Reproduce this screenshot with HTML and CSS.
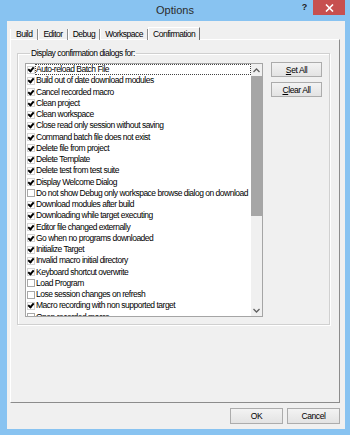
FILE: index.html
```html
<!DOCTYPE html>
<html>
<head>
	<title>Options</title>
	<link rel="stylesheet" href="styles.css">
</head>
<body>
	<div class="window">
		<div class="titlebar">
			<span class="title">Options</span>
			<span class="help">?</span>
			<span class="close">
				<svg width="9" height="8" viewBox="0 0 9 8"><path d="M1 0.5 L8 7.5 M8 0.5 L1 7.5" stroke="#fff" stroke-width="1.6" fill="none"/></svg>
			</span>
		</div>
		<div class="client">
			<div class="tabs">
				<div class="tab">Build</div>
				<div class="tab">Editor</div>
				<div class="tab">Debug</div>
				<div class="tab">Workspace</div>
				<div class="tab active">Confirmation</div>
			</div>
			<div class="panel">
				<fieldset class="group">
					<legend>Display confirmation dialogs for:</legend>
					<div class="group-body">
						<div class="listbox">
							<ul class="items">
								<li><span class="box on"></span><span class="label focus">Auto-reload Batch File</span></li>
								<li><span class="box on"></span><span class="label">Build out of date download modules</span></li>
								<li><span class="box on"></span><span class="label">Cancel recorded macro</span></li>
								<li><span class="box on"></span><span class="label">Clean project</span></li>
								<li><span class="box on"></span><span class="label">Clean workspace</span></li>
								<li><span class="box on"></span><span class="label">Close read only session without saving</span></li>
								<li><span class="box on"></span><span class="label">Command batch file does not exist</span></li>
								<li><span class="box on"></span><span class="label">Delete file from project</span></li>
								<li><span class="box on"></span><span class="label">Delete Template</span></li>
								<li><span class="box on"></span><span class="label">Delete test from test suite</span></li>
								<li><span class="box on"></span><span class="label">Display Welcome Dialog</span></li>
								<li><span class="box"></span><span class="label">Do not show Debug only workspace browse dialog on download</span></li>
								<li><span class="box on"></span><span class="label">Download modules after build</span></li>
								<li><span class="box on"></span><span class="label">Downloading while target executing</span></li>
								<li><span class="box on"></span><span class="label">Editor file changed externally</span></li>
								<li><span class="box on"></span><span class="label">Go when no programs downloaded</span></li>
								<li><span class="box on"></span><span class="label">Initialize Target</span></li>
								<li><span class="box on"></span><span class="label">Invalid macro initial directory</span></li>
								<li><span class="box on"></span><span class="label">Keyboard shortcut overwrite</span></li>
								<li><span class="box"></span><span class="label">Load Program</span></li>
								<li><span class="box"></span><span class="label">Lose session changes on refresh</span></li>
								<li><span class="box on"></span><span class="label">Macro recording with non supported target</span></li>
								<li><span class="box"></span><span class="label">Open recorded macro</span></li>
							</ul>
							<div class="scrollbar">
								<div class="arrow">
									<svg width="7" height="5" viewBox="0 0 7 5"><path d="M0.5 4 L3.5 1 L6.5 4" stroke="#606060" stroke-width="1.3" fill="none"/></svg>
								</div>
								<div class="thumb"></div>
								<div class="track"></div>
								<div class="arrow">
									<svg width="7" height="5" viewBox="0 0 7 5"><path d="M0.5 1 L3.5 4 L6.5 1" stroke="#606060" stroke-width="1.3" fill="none"/></svg>
								</div>
							</div>
						</div>
						<div class="side-buttons">
							<button><u>S</u>et All</button>
							<button><u>C</u>lear All</button>
						</div>
					</div>
				</fieldset>
			</div>
			<div class="dialog-buttons">
				<button>OK</button>
				<button>Cancel</button>
			</div>
		</div>
	</div>
</body>
</html>
```

FILE: styles.css
```css
body {
	margin: 0;
	font-family: "Liberation Sans", Arial, sans-serif;
	font-size: 8.5px;
	letter-spacing: -0.5px;
	color: #000;
}

.window {
	width: 350px;
	height: 435px;
	background-color: #88c3f1;
	display: flex;
	flex-direction: column;
}

.titlebar {
	height: 21px;
	display: flex;
	align-items: flex-start;
	padding: 0 5px 0 54px;
	letter-spacing: 0;
}

.title {
	flex: 1;
	text-align: center;
	font-size: 11px;
	line-height: 21px;
	color: #2b2b2b;
}

.help {
	width: 17px;
	text-align: center;
	font-weight: bold;
	font-size: 9px;
	line-height: 14px;
	color: #222;
}

.close {
	width: 32px;
	height: 15px;
	background-color: #c7504f;
	display: flex;
	align-items: center;
	justify-content: center;
}

.client {
	flex: 1;
	margin: 0 5px 6px 7px;
	padding: 6px 5px 5px 3px;
	background-color: #f0f0f0;
	display: flex;
	flex-direction: column;
}

.tabs {
	height: 13px;
	display: flex;
	align-items: flex-end;
	margin-bottom: -1px;
	position: relative;
	z-index: 1;
}

.tab {
	height: 11px;
	line-height: 11px;
	padding: 0 4px;
	border-left: 1px solid #fff;
	border-right: 1px solid #8c8c8c;
	box-sizing: border-box;
}

.tab:first-child {
	padding: 0 5px;
}

.tab.active {
	height: 13px;
	line-height: 12px;
	border-top: 1px solid #fff;
	border-right: 1px solid #6e6e6e;
	background-color: #f0f0f0;
}

.panel {
	height: 364px;
	box-sizing: border-box;
	border-top: 1px solid #fff;
	border-left: 1px solid #fff;
	border-right: 1px solid #8c8c8c;
	border-bottom: 1px solid #8c8c8c;
	padding-top: 7px;
}

.group {
	margin: 0 9px 0 6px;
	padding: 4px 7px 7px 7px;
	border: 1px solid #d0d0d0;
	box-shadow: 1px 1px 0 #fff, inset 1px 1px 0 #fff;
}

.group legend {
	margin-left: 5px;
	padding: 0 1px;
	line-height: 12px;
}

.group-body {
	display: flex;
	gap: 8px;
}

.listbox {
	width: 238px;
	height: 254px;
	box-sizing: border-box;
	border: 1px solid #a5a5a5;
	background-color: #fff;
	display: flex;
}

.items {
	flex: 1;
	list-style: none;
	margin: 0;
	padding: 0 0 0 1px;
	overflow: hidden;
}

.items li {
	height: 11.25px;
	display: flex;
	align-items: center;
	white-space: nowrap;
}

.box {
	width: 8px;
	height: 8px;
	box-sizing: border-box;
	border: 1px solid #a8a8a8;
	background-color: #fff;
	display: flex;
	align-items: center;
	justify-content: center;
	flex-shrink: 0;
}

.box.on {
	border-color: #d4d4d4;
}

.box.on::after {
	content: "";
	width: 2px;
	height: 4px;
	margin-top: -1px;
	border: solid #000;
	border-width: 0 2px 2px 0;
	transform: rotate(40deg);
}

.label {
	flex: 1;
	height: 11px;
	line-height: 9px;
	border: 1px dotted transparent;
	box-sizing: border-box;
}

.label.focus {
	border-color: #444;
}

.scrollbar {
	width: 11px;
	background-color: #f0f0f0;
	display: flex;
	flex-direction: column;
}

.arrow {
	height: 12px;
	display: flex;
	align-items: center;
	justify-content: center;
}

.thumb {
	height: 140px;
	background-color: #a6a6a6;
}

.track {
	flex: 1;
}

.side-buttons {
	display: flex;
	flex-direction: column;
	gap: 5px;
	margin-top: -1px;
}

button {
	font-family: "Liberation Sans", Arial, sans-serif;
	font-size: 8.5px;
	letter-spacing: -0.4px;
	color: #000;
	padding: 0;
	border: 1px solid #acacac;
	border-radius: 0;
	background: linear-gradient(#f3f3f3, #e3e3e3);
}

.side-buttons button {
	width: 51px;
	height: 15px;
}

.dialog-buttons {
	display: flex;
	justify-content: flex-end;
	gap: 4px;
	margin-top: 5px;
}

.dialog-buttons button {
	width: 53px;
	height: 16px;
}
```
